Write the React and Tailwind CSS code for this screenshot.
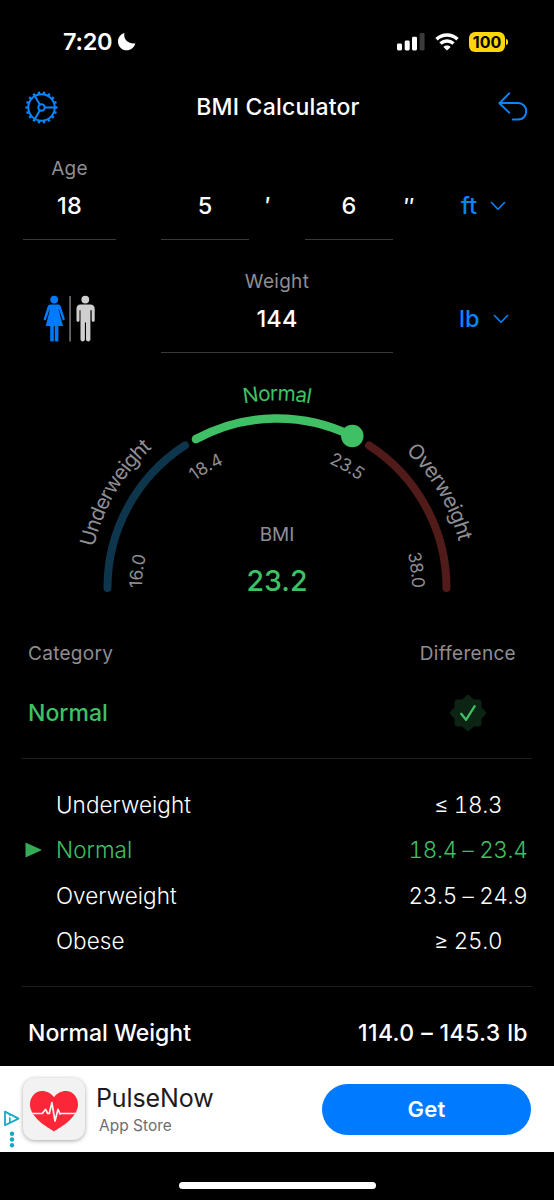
import React from "react";

const ranges = [
  { label: "Underweight", value: "≤ 18.3" },
  { label: "Normal", value: "18.4 – 23.4", active: true },
  { label: "Overweight", value: "23.5 – 24.9" },
  { label: "Obese", value: "≥ 25.0" },
];

const gearTeeth = Array.from({ length: 18 }, (_, index) => index * 20);

const StatusBar = () => (
  <div className="flex h-[83px] items-center justify-between pl-[63px] pr-[46px] text-white">
    <div className="flex items-center gap-[5px]">
      <span className="text-[23.5px] font-semibold leading-none tracking-[-0.3px]">7:20</span>
      <svg width="20" height="20" viewBox="0 0 20 20" fill="currentColor">
        <path d="M7.4 1.1C6.3 6.8 10.4 12.3 18.4 11.5C16.9 15.9 13.6 18.3 9.9 18.3C4.9 18.3 1 14.5 1 9.7C1 5.6 3.3 2.4 7.4 1.1Z" />
      </svg>
    </div>

    <div className="flex items-center gap-[10px]">
      <svg width="28" height="18" viewBox="0 0 28 18" fill="currentColor">
        <rect x="0" y="10.5" width="5" height="7" rx="1.4" />
        <rect x="7.7" y="7.5" width="5" height="10" rx="1.4" />
        <rect x="15" y="3.8" width="5" height="13.7" rx="1.4" />
        <rect x="22.6" y="0" width="5" height="17.5" rx="1.4" fill="#3a3a3c" />
      </svg>
      <svg width="24" height="18" viewBox="0 0 24 18" fill="none" stroke="currentColor">
        <path d="M1.5 6.3C7.4 0.7 16.6 0.7 22.5 6.3" strokeWidth="3.5" />
        <path d="M5.5 10.6C9.3 7.1 14.7 7.1 18.5 10.6" strokeWidth="3.4" />
        <path d="M12 17.6L8.4 13.9C10.4 12.1 13.6 12.1 15.6 13.9Z" fill="currentColor" stroke="none" />
      </svg>
      <div className="flex items-center gap-px">
        <div className="flex h-5 w-9 items-center justify-center rounded-[6px] bg-[#ffd60a] text-[16px] font-bold leading-none text-black">
          100
        </div>
        <div className="h-[6px] w-[2px] rounded-r-full bg-[#ffd60a]" />
      </div>
    </div>
  </div>
);

const Header = () => (
  <header className="flex h-12 items-center justify-between pl-[25px] pr-[26px]">
    <svg width="33" height="33" viewBox="-16.5 -16.5 33 33" fill="none" stroke="#0a84ff" strokeWidth="2">
      <circle r="13.2" />
      <circle r="3.2" />
      <path d="M3.2 0H13M-1.6 -2.8L-6.5 -11.3M-1.6 2.8L-6.5 11.3" />
      {gearTeeth.map((angle) => (
        <path key={angle} d="M13.4 0H16" strokeWidth="2.4" transform={`rotate(${angle})`} />
      ))}
    </svg>
    <h1 className="text-[23px] font-[550] leading-none tracking-[0.2px] text-white">BMI Calculator</h1>
    <svg width="30" height="30" viewBox="0 0 30 30" fill="none" stroke="#0a84ff" strokeWidth="2" strokeLinecap="round" strokeLinejoin="round">
      <path d="M11.2 1.4L1.4 11.2L11.2 20.6M1.6 11.1H20C24.9 11.1 28.2 14.6 28.2 19.2C28.2 24 24.9 27.6 20 27.6H14.8" />
    </svg>
  </header>
);

const Field = ({ label, value, className }) => (
  <div className={`flex h-[84px] flex-col items-center border-b border-[#3a3a3c] ${className}`}>
    <span className="h-[27px] text-[19px] leading-[26px] tracking-[0.3px] text-[#8e8e93]">{label}</span>
    <span className="mt-[9px] text-[23.5px] font-[450] leading-7 tracking-[0.2px] text-white">{value}</span>
  </div>
);

const UnitPicker = ({ unit, className }) => (
  <div className={`flex items-center text-[#0a84ff] ${className}`}>
    <span className="text-[23.5px] font-[450] leading-7">{unit}</span>
    <svg width="16" height="10" viewBox="0 0 16 10" fill="none" stroke="currentColor" strokeWidth="1.6" strokeLinecap="round" strokeLinejoin="round">
      <path d="M1.5 1.5L8 8.2L14.5 1.5" />
    </svg>
  </div>
);

const GenderToggle = () => (
  <svg className="ml-[43px] mt-[26px] shrink-0" width="53" height="48" viewBox="0 0 53 48">
    <g fill="#007aff">
      <circle cx="11.2" cy="4.6" r="3.9" />
      <path d="M7.4 9.4H15C16.5 9.4 17.4 10.2 17.8 11.5L21.7 23.6C22.2 25.2 20.1 26 19.5 24.4L16 14.4L15.6 14.6L20 31H2.7L6.9 14.6L6.5 14.4L3 24.4C2.4 26 0.3 25.2 0.8 23.6L4.7 11.5C5.1 10.2 6 9.4 7.4 9.4Z" />
      <rect x="7.2" y="29" width="3.6" height="17.5" rx="1.2" />
      <rect x="11.8" y="29" width="3.6" height="17.5" rx="1.2" />
    </g>
    <rect x="26.4" y="1" width="1.3" height="45.5" fill="#8e8e93" />
    <g fill="#cfcfcf">
      <circle cx="42.3" cy="4.6" r="3.9" />
      <path d="M37.5 9.4H47.4C50.2 9.4 51.7 11.1 51.7 13.6V25.2C51.7 27.2 48.7 27.2 48.7 25.2V15.2H47.4V44.6C47.4 47 43 47 43 44.6V27.5H41.9V44.6C41.9 47 37.5 47 37.5 44.6V15.2H36.5V25.2C36.5 27.2 33.5 27.2 33.5 25.2V13.6C33.5 11.1 34.8 9.4 37.5 9.4Z" />
    </g>
  </svg>
);

const Gauge = () => (
  <svg className="shrink-0" width="554" height="250" viewBox="0 365 554 250" fill="none" strokeLinecap="round">
    <defs>
      <path id="outer-arc" d="M89.5 588A187.5 187.5 0 0 1 464.5 588" />
      <path id="inner-arc" d="M142 588A135 135 0 0 1 412 588" />
    </defs>
    <path d="M107.5 588A169.5 169.5 0 0 1 185 445.4" stroke="#0d354b" strokeWidth="8" />
    <path d="M369 445.4A169.5 169.5 0 0 1 446.5 588" stroke="#511b1a" strokeWidth="8" />
    <path d="M196 439.1A169.5 169.5 0 0 1 352.3 436" stroke="#40c064" strokeWidth="8.5" />
    <circle cx="352.3" cy="436" r="11.2" fill="#40c064" />

    <g fill="#8e8e93" fontSize="20.8" fontWeight="400">
      <text textLength="117">
        <textPath href="#outer-arc" startOffset="41">Underweight</textPath>
      </text>
      <text fill="#3ec065" textLength="67">
        <textPath href="#outer-arc" startOffset="261">Normal</textPath>
      </text>
      <text textLength="106">
        <textPath href="#outer-arc" startOffset="436">Overweight</textPath>
      </text>
    </g>

    <g fill="#8e8e93" fontSize="17.5" fontWeight="400">
      <text textLength="33">
        <textPath href="#inner-arc" startOffset="0">16.0</textPath>
      </text>
      <text textLength="34">
        <textPath href="#inner-arc" startOffset="123.5">18.4</textPath>
      </text>
      <text textLength="35">
        <textPath href="#inner-arc" startOffset="265">23.5</textPath>
      </text>
      <text textLength="35">
        <textPath href="#inner-arc" startOffset="389">38.0</textPath>
      </text>
    </g>

    <text x="277" y="541" textAnchor="middle" fill="#8e8e93" fontSize="19">BMI</text>
    <text x="277" y="591" textAnchor="middle" fill="#3ec065" fontSize="28.5" fontWeight="450">23.2</text>
  </svg>
);

const CheckBadge = () => (
  <svg width="38" height="38" viewBox="-19 -19 38 38" fill="none">
    <g fill="#0b2413" stroke="#0b2413" strokeWidth="5" strokeLinejoin="round">
      <path d="M0 -15.5L4.6 -11.1L10.9 -10.9L11.1 -4.6L15.5 0L11.1 4.6L10.9 10.9L4.6 11.1L0 15.5L-4.6 11.1L-10.9 10.9L-11.1 4.6L-15.5 0L-11.1 -4.6L-10.9 -10.9L-4.6 -11.1Z" />
    </g>
    <path d="M-6.8 0.8L-2 6.8L6.7 -6.8" stroke="#3ec065" strokeWidth="2.3" strokeLinecap="round" strokeLinejoin="round" />
  </svg>
);

const RangeRow = ({ label, value, active }) => (
  <div className={`flex h-[45.5px] items-center text-[22.5px] ${active ? "text-[#3ec065]" : "text-white"}`}>
    <div className="flex w-8 shrink-0 items-center pl-[3px]">
      {active ? (
        <svg width="17" height="16" viewBox="0 0 17 16" fill="#34ab57">
          <path d="M1 0.8L16 7.5Q16.8 8 16 8.5L1 15.2Q0.5 15.4 0.5 14.8V1.2Q0.5 0.6 1 0.8Z" />
        </svg>
      ) : null}
    </div>
    <span className="flex-1 pl-[2px] font-light tracking-[0.05px]">{label}</span>
    <span className="w-[128px] text-center font-light tabular-nums tracking-[-0.35px]">{value}</span>
  </div>
);

const AdBanner = () => (
  <div className="flex h-[86px] shrink-0 items-center bg-white pr-[23px]">
    <svg className="mt-[43px] shrink-0" width="21" height="43" viewBox="0 0 21 43" fill="none">
      <path d="M5 2.6L18.5 9.6L5 16.2Z" stroke="#16a9c4" strokeWidth="1.8" strokeLinejoin="round" />
      <path d="M9.8 8.2V13.6M9.8 5.6V6.8" stroke="#16a9c4" strokeWidth="1.6" />
      <circle cx="12" cy="24.7" r="2.2" fill="#16a9c4" />
      <circle cx="12" cy="30.5" r="2.2" fill="#16a9c4" />
      <circle cx="12" cy="36.3" r="2.2" fill="#16a9c4" />
    </svg>
    <div className="ml-[2px] flex size-[62px] shrink-0 items-center justify-center rounded-[12px] bg-[#f2f2f2] shadow-[0_1px_4px_rgba(0,0,0,0.35)]">
      <svg width="54" height="46" viewBox="0 -3 54 46" className="overflow-visible">
        <path d="M27 42.5C21 38.5 3 29 3 15.6C3 8 8.3 2 15 2C20.2 2 24.6 4.6 27 8.3C29.4 4.6 33.8 2 39 2C45.7 2 51 8 51 15.6C51 29 33 38.5 27 42.5Z" fill="#fb2738" />
        <path d="M1 24.5H15.3L18.6 20.3L20.7 24.5H22.3L24.9 13.7L28 32L31 20.3L33 25L34.3 24.5H52" fill="none" stroke="#f5f5f5" strokeWidth="1.7" strokeLinejoin="round" />
      </svg>
    </div>
    <div className="ml-[11px] flex flex-1 flex-col">
      <span className="text-[25px] leading-[30px] tracking-[-0.1px] text-[#1c1c1e]">PulseNow</span>
      <span className="mt-[3px] pl-[3px] text-[15.5px] leading-5 text-[#6e6e70]">App Store</span>
    </div>
    <button type="button" className="h-[51px] w-[209px] rounded-full bg-[#007bff] text-[22px] font-semibold tracking-[0.3px] text-white">
      Get
    </button>
  </div>
);

const App = () => (
  <div className="flex h-[1200px] w-[554px] flex-col overflow-hidden bg-black font-['Inter',sans-serif]">
    <StatusBar />
    <Header />

    <section className="mt-[25px] flex h-[109px] items-start">
      <Field label="Age" value="18" className="ml-[23px] w-[93px]" />
      <Field value="5" className="ml-[45px] w-[88px]" />
      <span className="ml-[16px] mt-[36px] w-[40px] text-[23.5px] font-medium leading-7 text-white">′</span>
      <Field value="6" className="w-[88px]" />
      <span className="ml-[11px] mt-[36px] w-[57px] text-[22px] font-medium leading-7 text-white">″</span>
      <UnitPicker unit="ft" className="mt-[36px] gap-[13px]" />
    </section>

    <section className="flex h-[100px] items-start pt-[4px]">
      <GenderToggle />
      <Field label="Weight" value="144" className="ml-[65px] w-[232px]" />
      <UnitPicker unit="lb" className="ml-[66px] mt-[36px] gap-[14px]" />
    </section>

    <Gauge />

    <section className="flex h-[143px] flex-col pl-7 pr-[38px] pt-[28px]">
      <div className="flex justify-between text-[19px] leading-[22px] tracking-[0.3px] text-[#8e8e93]">
        <span>Category</span>
        <span>Difference</span>
      </div>
      <div className="mt-[29px] flex items-center justify-between pr-[29px]">
        <span className="text-[23px] font-[450] leading-7 text-[#3ec065]">Normal</span>
        <CheckBadge />
      </div>
    </section>

    <section className="mx-[22px] h-[229px] border-y border-[#1f1f21] pt-[23px]">
      {ranges.map((range) => (
        <RangeRow key={range.label} {...range} />
      ))}
    </section>

    <section className="flex h-[79px] items-center justify-between pl-7 pr-[26px] pt-[13px] text-[23px] font-medium text-white">
      <span>Normal Weight</span>
      <span className="tracking-[0.4px]">114.0 – 145.3 lb</span>
    </section>

    <AdBanner />

    <div className="mx-auto mt-[30px] h-[7px] w-[197px] shrink-0 rounded-full bg-white" />
  </div>
);

export default App;
